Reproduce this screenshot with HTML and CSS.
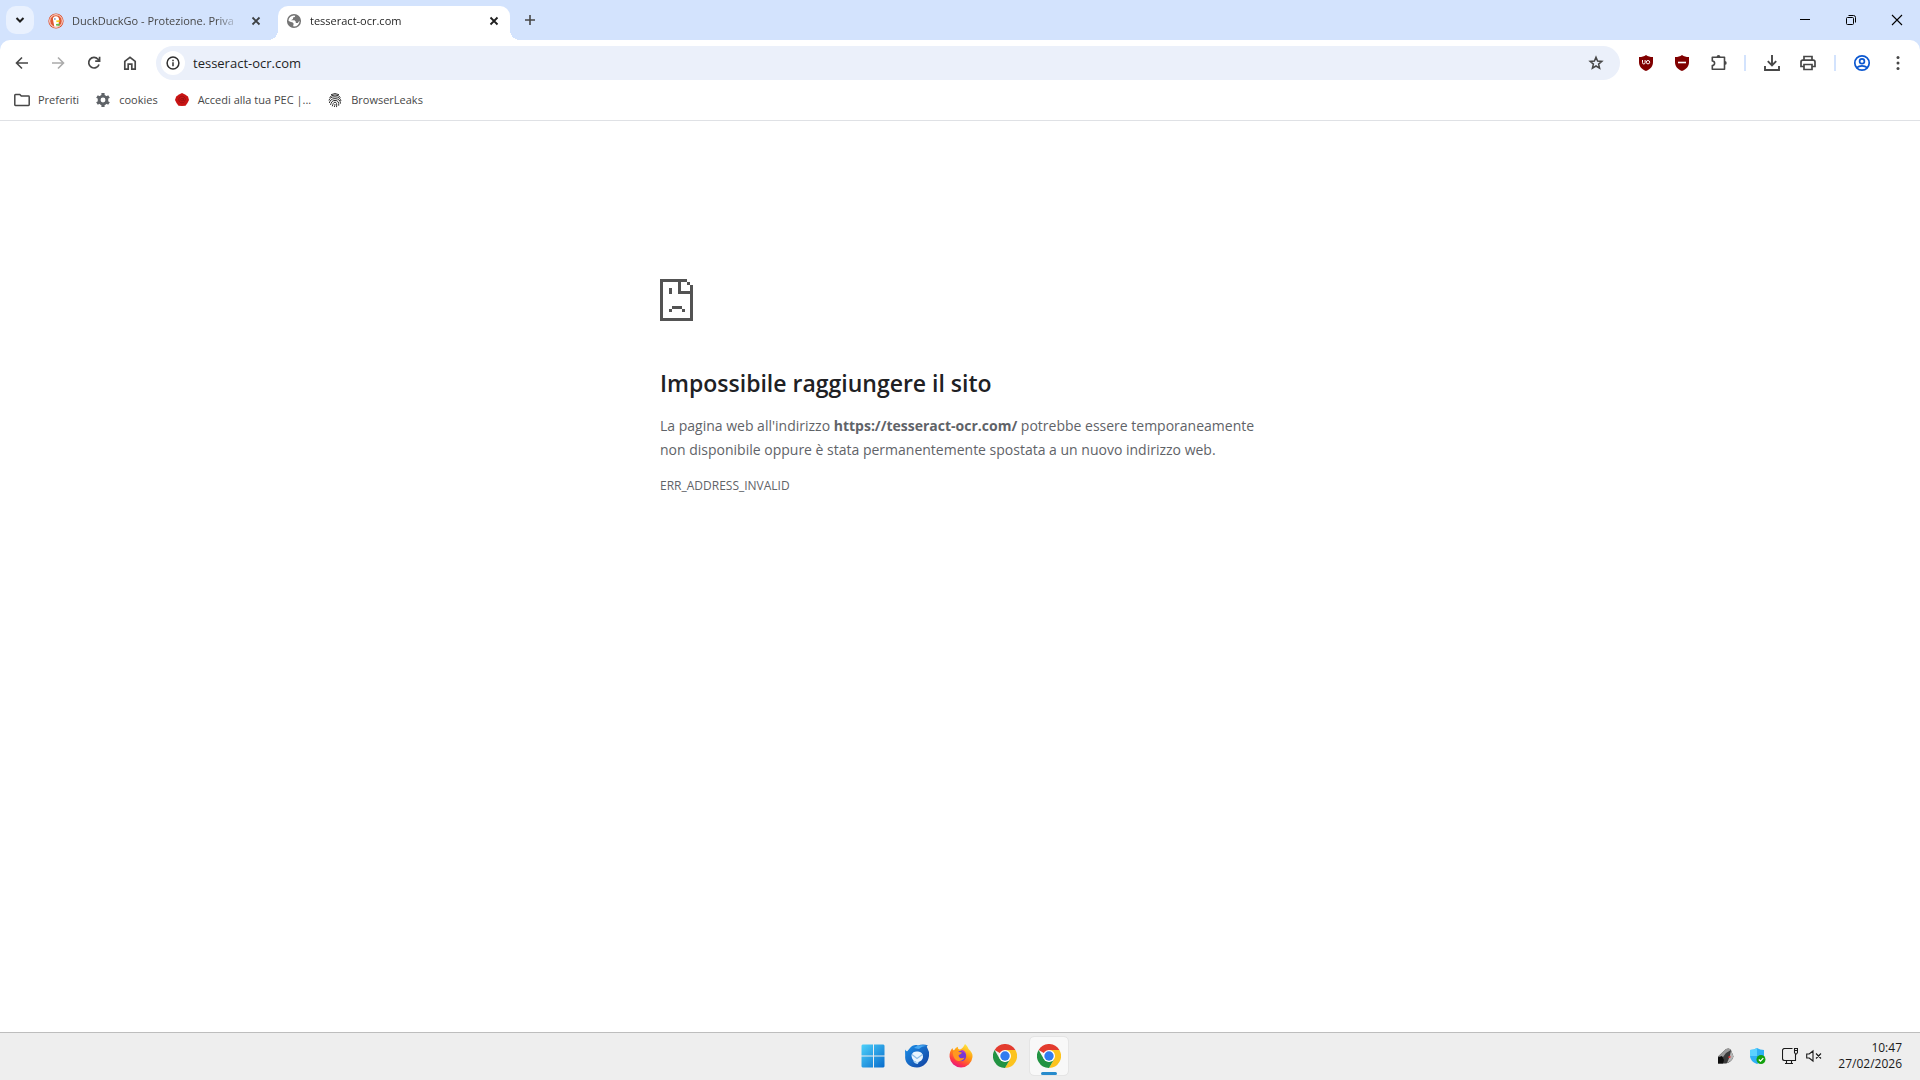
FILE: index.html
```html
<!DOCTYPE html>
<html lang="it">
<head>
<meta charset="utf-8">
<meta name="viewport" content="width=device-width, initial-scale=1">
<title>tesseract-ocr.com</title>
<link rel="stylesheet" href="styles.css">
</head>
<body>
<div class="desktop">
  <header class="browser">
    <div class="tabstrip">
      <button class="tab-search" aria-label="Cerca schede"><svg width="16" height="16" viewBox="0 0 16 16" fill="none" stroke="#1f1f1f" stroke-width="2"><path d="M4.500 6 8 9.500 11.500 6"/></svg></button>
      <div class="tab">
        <svg class="favicon" width="16" height="16" viewBox="0 0 16 16"><circle cx="8" cy="8" r="7.600" fill="#de4a26"/><circle cx="8" cy="8" r="6.300" fill="#de5833" stroke="#fff" stroke-width="0.900"/><path d="M6.300 13.500 5 6.500C4.600 4.500 5.800 3.200 8 3.300c2 .1 3 1.500 3 3.500l-.4 1.700.6 4.500a6 6 0 0 1-4.900.5z" fill="#fff"/><path d="M8.200 7.600 12 7.300l-.5 1.500-3 .4z" fill="#fdd20a"/><path d="m8 11 3.500-.5v2.500L8 12.500z" fill="#65bc46"/><circle cx="6.900" cy="6" r=".7" fill="#2d4f8e"/></svg>
        <span class="tab-title">DuckDuckGo - Protezione. Priva</span>
        <button class="tab-close" aria-label="Chiudi scheda"><svg width="16" height="16" viewBox="0 0 16 16" stroke="#3c4043" stroke-width="1.800"><path d="m4.500 4.500 7 7m0-7-7 7"/></svg></button>
      </div>
      <div class="tab tab-active">
        <svg class="favicon" width="16" height="16" viewBox="0 0 16 16"><circle cx="8" cy="8" r="6.300" fill="#fff" stroke="#757575" stroke-width="1.500"/><path d="M7 1.500 9.500 2 8.800 4 7 4.600V6L5 7.200h3.500l1.300 1.500V10h2l1.200-1.800L14.500 7.500A7 7 0 0 0 7 1.500zM1.500 7.500 5 9l1.800.5 1 1.500-.6 1L7.500 14.500A6.500 6.500 0 0 1 1.500 7.500z" fill="#757575"/></svg>
        <span class="tab-title">tesseract-ocr.com</span>
        <button class="tab-close" aria-label="Chiudi scheda"><svg width="16" height="16" viewBox="0 0 16 16" stroke="#1f1f1f" stroke-width="1.800"><path d="m4.500 4.500 7 7m0-7-7 7"/></svg></button>
      </div>
      <button class="new-tab" aria-label="Nuova scheda"><svg width="16" height="16" viewBox="0 0 16 16" stroke="#474747" stroke-width="1.600"><path d="M3 8h10M8 3v10"/></svg></button>
      <div class="window-controls">
        <button aria-label="Riduci a icona"><svg width="12" height="12" viewBox="0 0 12 12" stroke="#000"><path d="M1 5.500h10"/></svg></button>
        <button aria-label="Ripristina"><svg width="12" height="12" viewBox="0 0 12 12" fill="none" stroke="#000"><rect x="1.500" y="3.500" width="7" height="7" rx="1"/><path d="M3.500 1.500h5a2 2 0 0 1 2 2v5"/></svg></button>
        <button aria-label="Chiudi"><svg width="12" height="12" viewBox="0 0 12 12" stroke="#000" stroke-width="1.100"><path d="m1 1 10 10m0-10L1 11"/></svg></button>
      </div>
    </div>
    <nav class="toolbar">
      <button aria-label="Indietro"><svg width="20" height="20" viewBox="0 0 20 20" fill="none" stroke="#474747" stroke-width="1.600"><path d="M16 10H5M10 4.500 4.500 10l5.500 5.500"/></svg></button>
      <button aria-label="Avanti"><svg width="20" height="20" viewBox="0 0 20 20" fill="none" stroke="#ababab" stroke-width="1.600"><path d="M4 10h11M10 4.500l5.500 5.500-5.500 5.500"/></svg></button>
      <button aria-label="Ricarica"><svg width="20" height="20" viewBox="0 0 20 20" fill="none" stroke="#474747" stroke-width="1.700"><path d="M15 11.500A5.300 5.300 0 1 1 14 6.200l1.200 1.400M15.600 3.800v4.400h-4.400"/></svg></button>
      <button aria-label="Pagina iniziale"><svg width="20" height="20" viewBox="0 0 20 20" fill="none" stroke="#474747" stroke-width="1.700"><path d="M4.800 16.200V8.400L10 4.300l5.200 4.100v7.800h-3.400v-5H8.200v5z"/></svg></button>
      <div class="omnibox">
        <button class="site-info" aria-label="Informazioni sul sito"><svg width="16" height="16" viewBox="0 0 16 16" fill="none" stroke="#303030" stroke-width="1.500"><circle cx="8" cy="8" r="5.900"/><path d="M8 7.200v4M8 4.700v1.500"/></svg></button>
        <input type="text" value="tesseract-ocr.com" aria-label="Barra degli indirizzi">
        <button class="star" aria-label="Aggiungi ai preferiti"><svg width="20" height="20" viewBox="0 0 20 20" fill="none" stroke="#474747" stroke-width="1.500"><path d="m10 4.200 1.600 3.900 4.200.3-3.200 2.700 1 4.100L10 13l-3.600 2.200 1-4.100-3.200-2.700 4.200-.3z"/></svg></button>
      </div>
      <button aria-label="uBlock Origin"><svg width="16" height="16" viewBox="0 0 16 16"><path d="M8 0c2 1.500 4 2 7 2v5c0 4-2 7-7 9-5-2-7-5-7-9V2c3 0 5-.5 7-2z" fill="#800000"/><path d="M4.500 5v2.700a1.300 1.300 0 0 0 2.600 0V5" fill="none" stroke="#fff"/><circle cx="10" cy="7.200" r="1.700" fill="none" stroke="#fff"/></svg></button>
      <button aria-label="uBlock Origin Lite"><svg width="16" height="16" viewBox="0 0 16 16"><path d="M8 0c2 1.500 4 2 7 2v5c0 4-2 7-7 9-5-2-7-5-7-9V2c3 0 5-.5 7-2z" fill="#800000"/><path d="M4 7.500h8" stroke="#fff" stroke-width="1.600"/></svg></button>
      <button aria-label="Estensioni"><svg width="20" height="20" viewBox="0 0 20 20" fill="none" stroke="#474747" stroke-width="1.600"><path d="M4.300 4.300h12.200v12H4.300v-3.700a2.200 2.200 0 0 0 0-4.600z" stroke-linejoin="round"/><path d="M8.600 4a1.900 1.900 0 0 1 3.800 0zM16.800 8a1.900 1.900 0 0 1 0 3.800z" fill="#474747" stroke="none"/></svg></button>
      <span class="separator"></span>
      <button aria-label="Download"><svg width="20" height="20" viewBox="0 0 20 20" fill="none" stroke="#474747" stroke-width="1.900"><path d="M10 2v10M5.800 8.200 10 12.400l4.200-4.200M3 13v4h14v-4"/></svg></button>
      <button aria-label="Stampa"><svg width="20" height="20" viewBox="0 0 20 20" fill="none" stroke="#474747" stroke-width="1.700"><path d="M6 7V3.500h8V7M6 13.500H3V9a1.800 1.800 0 0 1 1.800-1.800h10.400A1.800 1.800 0 0 1 17 9v4.500h-3M6 11.500h8v5H6z"/></svg></button>
      <span class="separator"></span>
      <button aria-label="Profilo"><svg width="20" height="20" viewBox="0 0 20 20" fill="none" stroke="#0b57d0" stroke-width="1.700"><circle cx="10" cy="10" r="7.200"/><circle cx="10" cy="8.300" r="2.400"/><path d="M4.800 14.700c2.800-2.500 7.600-2.500 10.400 0"/></svg></button>
      <button aria-label="Menu"><svg width="20" height="20" viewBox="0 0 20 20" fill="#474747"><circle cx="10" cy="4.500" r="1.500"/><circle cx="10" cy="10" r="1.500"/><circle cx="10" cy="15.500" r="1.500"/></svg></button>
    </nav>
    <nav class="bookmarks">
      <a href="#"><svg width="16" height="16" viewBox="0 0 16 16" fill="none" stroke="#474747" stroke-width="1.500"><path d="M.8 3.200q0-.7.7-.7h4.300l1.500 1.600h7.200q.7 0 .7.700v8q0 .7-.7.700h-13q-.7 0-.7-.7z"/></svg>Preferiti</a>
      <a href="#"><svg width="16" height="16" viewBox="0 0 16 16"><circle cx="8" cy="8" r="3.900" fill="none" stroke="#5f6368" stroke-width="2.900"/><path d="M8 1v3M8 12v3M2 4.500l2.500 1.500M11.500 10l2.500 1.500M2 11.500 4.500 10M11.500 6 14 4.500" stroke="#5f6368" stroke-width="3.200"/></svg>cookies</a>
      <a href="#"><svg width="16" height="16" viewBox="0 0 16 16"><path d="M5 2.500 8 1l3 1.500 3 2L15 8l-1.500 3-2 2.700L8 14l-3.500-.3-2-2.700L1 8l1.200-3.500z" fill="#c91414"/><path d="M10.500 9.800a3.300 3.300 0 1 1 .9-2.300c0 1.800-2 1.800-2 .4V6" fill="none" stroke="#951010" stroke-width=".8"/><circle cx="8" cy="7.700" r="1.300" fill="none" stroke="#951010" stroke-width=".8"/></svg>Accedi alla tua PEC |...</a>
      <a href="#"><svg width="16" height="16" viewBox="0 0 16 16" fill="none" stroke="#333" stroke-width="1"><path d="M4 2.700Q8 .4 12 2.700M2.500 5.500Q4.500 3 8 3t5.500 2.500M2 8.500C2.500 6 4.500 4.800 8 4.800s5.500 1.700 6 4.200M2.300 11C3 8.500 4.500 6.600 8 6.600s5.500 2 5.500 5M3.500 13c.8-2.500 1.500-4.600 4.500-4.600s4.200 2 3.700 5.300M5.300 14.300C6 12 6.300 10.200 8 10.200s2 2 1.500 4.900M7.300 15c.4-1 .6-2 .7-3"/></svg>BrowserLeaks</a>
    </nav>
  </header>
  <main class="page">
    <section class="error">
      <svg class="sad-page" width="33" height="42" viewBox="0 0 33 42" fill="#535353" shape-rendering="crispEdges"><path d="M0 0h27v3H21v9h9V6h3v36H0zM3 3v36h27V15H18V3zM27 3h3v3h-3zM9 9h3v6H9zM12 27h10v3H12zM9 30h3v3H9zM22 30h3v3h-3z" fill-rule="evenodd"/></svg>
      <h1>Impossibile raggiungere il sito</h1>
      <p>La pagina web all'indirizzo <strong>https://tesseract-ocr.com/</strong> potrebbe essere temporaneamente<br>non disponibile oppure è stata permanentemente spostata a un nuovo indirizzo web.</p>
      <div class="error-code">ERR_ADDRESS_INVALID</div>
    </section>
  </main>
  <footer class="taskbar">
    <div class="apps">
      <button aria-label="Start"><svg width="24" height="24" viewBox="0 0 24 24"><defs><linearGradient id="win" x1="0" y1="0" x2="24" y2="24" gradientUnits="userSpaceOnUse"><stop stop-color="#4fd3fb"/><stop offset="1" stop-color="#0669cb"/></linearGradient></defs><path d="M1.500.500H12v11H.500v-10zM13 .500h9.500l1 1v10H13zM.500 12.500H12v11H1.500l-1-1zM13 12.500h10.500v10l-1 1H13z" fill="url(#win)"/></svg></button>
      <button aria-label="Thunderbird"><svg width="24" height="24" viewBox="0 0 24 24"><defs><linearGradient id="tb" x1="0" y1="0" x2="1" y2="1"><stop stop-color="#1b91ea"/><stop offset="1" stop-color="#123f9e"/></linearGradient></defs><path d="M0 5.500c1 1.500 1.500 2 2.500 1.500L5 4c2-2.500 5-3.500 8-2.500 3-1.500 7-1.500 10 0-1 .5-1.500 1-1 1.700L24 8c1 8-4 15.500-12 15.500C4 23.500-.5 18 .2 12z" fill="url(#tb)"/><path d="M9 4c3-3 8-3.500 13-2-4 0-6 1-8 3z" fill="#49a9f2"/><path d="M6.500 11C7.500 8 10 7 13 7.500c3 .3 5 2 5 5 0 3-2.500 5.500-5.500 5.500s-6-2.500-6-7z" fill="#e9f5ff"/><path d="m7 10.500 5 4 5.500-4" fill="none" stroke="#8dbde8" stroke-width="1.200"/><path d="M8 16c2 2 4 2.500 6.500 1.500-1 .8-1.500 1.500-1.500 2.500-2.500 0-4.500-1.500-5-4z" fill="#b8defa"/></svg></button>
      <button aria-label="Firefox"><svg width="24" height="24" viewBox="0 0 24 24"><defs><linearGradient id="ff" x1=".8" y1="0" x2=".3" y2="1"><stop stop-color="#fff044"/><stop offset=".45" stop-color="#ff980e"/><stop offset=".8" stop-color="#ff3647"/><stop offset="1" stop-color="#e31587"/></linearGradient></defs><path d="M16 0c2 2 3 3 3.500 5C22 7 24 10 23.500 13A11.500 11.500 0 0 1 .6 13C.3 9 1.500 6 3.500 4c0 1 .5 2 1.500 2.500C6 4.500 7.500 3 9 2.700 8.500 4.500 9.500 5 11 5.500c2-.5 4-3 5-5.500z" fill="url(#ff)"/><circle cx="12" cy="12" r="5.200" fill="#7738d4"/><path d="M4 8c2-2 5-1 6 0l3 .5c-.5 2-3 1.500-3.500 3 .5 3 4 3.500 6 2-1.500 4-7 5-10 1-1-2-2-4-1.500-6.500z" fill="#ff9820"/><path d="M12 6c3 0 5 2 5.300 5-.6-1.600-2-3-4.300-3z" fill="#b535d2"/></svg></button>
      <button aria-label="Google Chrome"><svg width="24" height="24" viewBox="0 0 24 24"><path d="M12 12 1.600 6a12 12 0 0 1 20.800 0z" fill="#e33b2e"/><path d="M12 6h10.400A12 12 0 0 1 12 24l5.200-9z" fill="#fcc31e"/><path d="M1.600 6 6.800 15 12 18l5.200-3L12 24A12 12 0 0 1 1.600 6z" fill="#229342"/><circle cx="12" cy="12" r="6" fill="#fff"/><circle cx="12" cy="12" r="4.700" fill="#307cf0"/></svg></button>
      <button class="running" aria-label="Google Chrome, in esecuzione"><svg width="24" height="24" viewBox="0 0 24 24"><path d="M12 12 1.600 6a12 12 0 0 1 20.800 0z" fill="#e33b2e"/><path d="M12 6h10.400A12 12 0 0 1 12 24l5.200-9z" fill="#fcc31e"/><path d="M1.600 6 6.800 15 12 18l5.200-3L12 24A12 12 0 0 1 1.600 6z" fill="#229342"/><circle cx="12" cy="12" r="6" fill="#fff"/><circle cx="12" cy="12" r="4.700" fill="#307cf0"/></svg></button>
    </div>
    <div class="tray">
      <svg width="16" height="16" viewBox="0 0 16 16"><path d="M0 8.500 8 1q3.500-1.500 5 1l2.500 6.500Q14 14 8 15.500H0z" fill="#3a3a3a"/><path d="M0 8.500 8 1q3.500-1.500 5 1L8 5 5 9z" fill="#9a9a9a"/><path d="M0 9.500 4 8l2 4-1 3.500H0z" fill="#0c0c0c"/><path d="M13 2.500l2.500 6Q14 13 9 15q3-5 4-12.500z" fill="#b5b5b5"/><path d="m10.500 9.500 2-1" stroke="#e53535" stroke-width="1.500"/></svg>
      <svg class="shield" width="16" height="16" viewBox="0 0 16 16"><path d="M7 0q3 2 7 2v6q0 5-7 8Q0 13 0 8V2q4 0 7-2z" fill="#2fb0f5"/><path d="M7 0v8H0V2q4 0 7-2z" fill="#5bd2ff"/><circle cx="11" cy="11.500" r="4.500" fill="#13a10e"/><path d="m8.800 11.500 1.700 1.600 2.800-3" fill="none" stroke="#fff" stroke-width="1.300"/></svg>
      <button class="network" aria-label="Rete e volume"><svg width="16" height="16" viewBox="0 0 16 16" fill="none" stroke="#1a1a1a" stroke-width="1.100"><path d="M10.500.500h-8a2 2 0 0 0-2 2v8a2 2 0 0 0 2 2h11V6M4.500 12.500v3M9.500 12.500v3M3 15.500h8M12.500.500h3v4l-1 1.500h-1l-1-1.500zM12.500 2.500h3"/></svg><svg width="16" height="16" viewBox="0 0 16 16" fill="none" stroke="#1a1a1a" stroke-width="1.100"><path d="M.700 6v4h2.500L7 13V3L3.200 6zM10 5.500l5 5m0-5-5 5"/></svg></button>
      <time class="clock" datetime="2026-02-27T10:47"><span>10:47</span><span>27/02/2026</span></time>
    </div>
  </footer>
</div>
</body>
</html>
```
FILE: styles.css
```css
* { box-sizing: border-box; }
body {
  margin: 0;
  font-family: "Segoe UI", "Open Sans", "Noto Sans", sans-serif;
  font-size: 11px;
  color: #1f1f1f;
  background: #fff;
}
button {
  display: flex;
  align-items: center;
  justify-content: center;
  flex: none;
  padding: 0;
  border: 0;
  background: none;
}
svg { flex: none; display: block; }
.desktop { display: flex; flex-direction: column; min-height: 100vh; }
.browser { background: #d3e3fd; }

.tabstrip { display: flex; align-items: flex-end; height: 40px; padding-left: 6px; }
.tab-search { width: 28px; height: 28px; margin: 0 6px 6px 0; border-radius: 10px; background: #e9f1fe; }
.tab { position: relative; display: flex; align-items: center; gap: 8px; width: 232px; height: 34px; padding: 0 8px 4px; margin-right: 6px; color: #474747; }
.tab-title { flex: 1; overflow: hidden; white-space: nowrap; line-height: 20px; mask-image: linear-gradient(to right, #000 calc(100% - 24px), transparent); }
.tab-close { width: 16px; height: 16px; }
.tab-active { margin-right: 0; color: #1f1f1f; background: #fff; border-radius: 10px 10px 0 0; }
.tab-active::before, .tab-active::after { content: ""; position: absolute; bottom: 0; width: 10px; height: 10px; }
.tab-active::before { right: 100%; background: radial-gradient(circle at 0 0, transparent 10px, #fff 10px); }
.tab-active::after { left: 100%; background: radial-gradient(circle at 100% 0, transparent 10px, #fff 10px); }
.new-tab { width: 28px; height: 28px; margin: 0 0 6px 6px; }
.window-controls { display: flex; align-self: stretch; margin-left: auto; }
.window-controls button { width: 46px; }

.toolbar { display: flex; align-items: center; gap: 8px; height: 46px; padding: 0 8px; background: #fff; border-radius: 10px 10px 0 0; }
.toolbar button { width: 28px; height: 28px; }
.omnibox { flex: 1; display: flex; align-items: center; gap: 8px; min-width: 0; height: 34px; margin: 0 4px; padding: 0 10px 0 5px; border-radius: 17px; background: #ebf0fa; }
.omnibox input { flex: 1; min-width: 0; padding: 0; border: 0; background: none; font: inherit; font-size: 13px; color: #1f1f1f; outline: none; }
.omnibox .site-info { width: 24px; height: 24px; border-radius: 50%; background: #fff; }
.separator { width: 2px; height: 16px; margin: 0 4px; background: #d3e3fd; }

.bookmarks { display: flex; align-items: center; gap: 16px; height: 35px; padding: 0 14px 7px; background: #fff; border-bottom: 1px solid #dfe1e5; }
.bookmarks a { display: flex; align-items: center; gap: 8px; color: #474747; text-decoration: none; white-space: nowrap; }

.page { flex: 1; background: #fff; }
.error { width: 100%; max-width: 600px; margin: 0 auto; padding-top: 158px; color: #5f6368; font-size: 14px; }
h1 { margin: 45px 0 14px; font-size: 23px; font-weight: 600; line-height: 34px; color: #202124; }
p { margin: 0; line-height: 24px; white-space: nowrap; }
.error-code { margin-top: 14px; font-size: 12px; line-height: 20px; }

.taskbar { display: grid; grid-template-columns: 1fr auto 1fr; align-items: center; height: 48px; padding-bottom: 2px; border-top: 1px solid #bdbdbd; background: #eee; }
.apps { grid-column: 2; display: flex; gap: 6px; padding-left: 2px; }
.apps button { position: relative; width: 38px; height: 38px; border-radius: 4px; }
.apps .running { background: #f8f8f8; outline: 1px solid #e5e5e5; }
.running::after { content: ""; position: absolute; bottom: 0; left: 11px; width: 16px; height: 3px; border-radius: 2px; background: #278bcc; }
.tray { display: flex; align-items: center; justify-content: flex-end; gap: 16px; padding-right: 18px; }
.network { gap: 8px; }
.clock { display: flex; flex-direction: column; align-items: flex-end; font-size: 12px; line-height: 16px; color: #1a1a1a; }
```
